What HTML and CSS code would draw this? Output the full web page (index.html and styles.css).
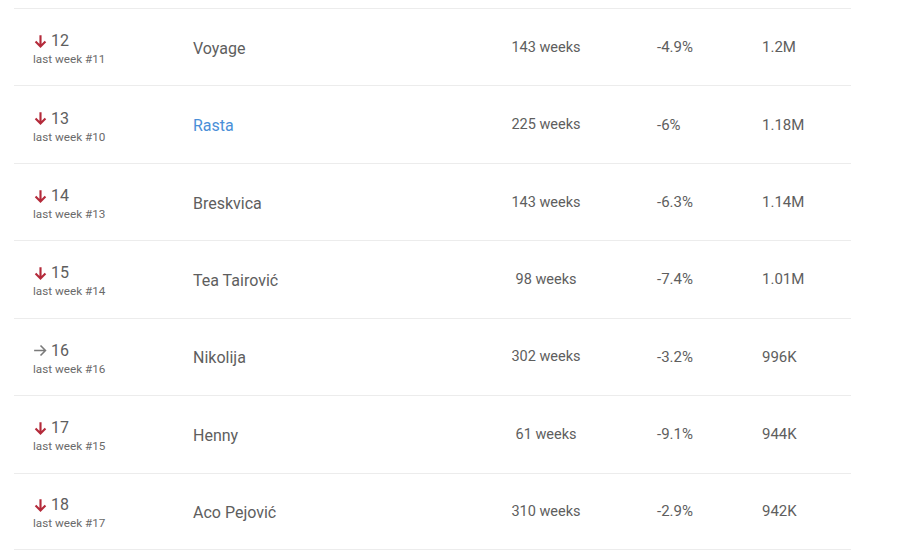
FILE: index.html
```html
<!DOCTYPE html>
<html lang="en">
<head>
<meta charset="utf-8">
<link rel="stylesheet" href="styles.css">
</head>
<body>
<div class="chart">
  <div class="row">
    <div class="rank"><div class="pos"><svg class="ic down" viewBox="0 0 24 24"><path d="M12 3v16M5 12l7 7 7-7"/></svg><span>12</span></div><div class="last">last week #11</div></div>
    <div class="name">Voyage</div>
    <div class="weeks">143 weeks</div>
    <div class="change">-4.9%</div>
    <div class="streams">1.2M</div>
  </div>
  <div class="row">
    <div class="rank"><div class="pos"><svg class="ic down" viewBox="0 0 24 24"><path d="M12 3v16M5 12l7 7 7-7"/></svg><span>13</span></div><div class="last">last week #10</div></div>
    <div class="name"><a class="link" href="#">Rasta</a></div>
    <div class="weeks">225 weeks</div>
    <div class="change">-6%</div>
    <div class="streams">1.18M</div>
  </div>
  <div class="row">
    <div class="rank"><div class="pos"><svg class="ic down" viewBox="0 0 24 24"><path d="M12 3v16M5 12l7 7 7-7"/></svg><span>14</span></div><div class="last">last week #13</div></div>
    <div class="name">Breskvica</div>
    <div class="weeks">143 weeks</div>
    <div class="change">-6.3%</div>
    <div class="streams">1.14M</div>
  </div>
  <div class="row">
    <div class="rank"><div class="pos"><svg class="ic down" viewBox="0 0 24 24"><path d="M12 3v16M5 12l7 7 7-7"/></svg><span>15</span></div><div class="last">last week #14</div></div>
    <div class="name">Tea Tairović</div>
    <div class="weeks">98 weeks</div>
    <div class="change">-7.4%</div>
    <div class="streams">1.01M</div>
  </div>
  <div class="row">
    <div class="rank"><div class="pos"><svg class="ic same" viewBox="0 0 24 24"><path d="M3 12h16M12 5l7 7-7 7"/></svg><span>16</span></div><div class="last">last week #16</div></div>
    <div class="name">Nikolija</div>
    <div class="weeks">302 weeks</div>
    <div class="change">-3.2%</div>
    <div class="streams">996K</div>
  </div>
  <div class="row">
    <div class="rank"><div class="pos"><svg class="ic down" viewBox="0 0 24 24"><path d="M12 3v16M5 12l7 7 7-7"/></svg><span>17</span></div><div class="last">last week #15</div></div>
    <div class="name">Henny</div>
    <div class="weeks">61 weeks</div>
    <div class="change">-9.1%</div>
    <div class="streams">944K</div>
  </div>
  <div class="row last-row">
    <div class="rank"><div class="pos"><svg class="ic down" viewBox="0 0 24 24"><path d="M12 3v16M5 12l7 7 7-7"/></svg><span>18</span></div><div class="last">last week #17</div></div>
    <div class="name">Aco Pejović</div>
    <div class="weeks">310 weeks</div>
    <div class="change">-2.9%</div>
    <div class="streams">942K</div>
  </div>
</div>
</body>
</html>
```

FILE: styles.css
```css
html, body {
  margin: 0;
  padding: 0;
  background: #fff;
}
body {
  font-family: Roboto, "Liberation Sans", sans-serif;
  color: #5e5e5e;
}
.chart {
  margin: 8px 0 0 14px;
  width: 837px;
}
.row {
  display: grid;
  grid-template-columns: 179px 287px 132px 150px 89px;
  align-items: center;
  height: 77.43px;
  box-sizing: border-box;
  border-top: 1px solid #ececec;
}
.last-row {
  border-bottom: 1px solid #ececec;
}
.rank {
  padding-left: 18px;
  display: flex;
  flex-direction: column;
  margin-top: 4px;
}
.pos {
  display: flex;
  align-items: center;
  font-size: 16px;
  line-height: 18px;
}
.pos span {
  margin-left: 2px;
}
.ic {
  width: 17px;
  height: 17px;
  fill: none;
  stroke-width: 3;
  stroke-linecap: butt;
  stroke-linejoin: miter;
}
.down { stroke: #b42a3a; }
.same { stroke: #7a7a7a; stroke-width: 2.2; }
.last {
  font-size: 11.7px;
  line-height: 14px;
  color: #6a6a6a;
  margin-top: 2px;
  margin-left: 1px;
}
.name {
  font-size: 16px;
  margin-top: 2px;
}
.link {
  color: #4a8fd8;
  text-decoration: none;
}
.weeks {
  font-size: 14.5px;
  text-align: center;
}
.change {
  font-size: 15px;
  padding-left: 45px;
}
.streams {
  font-size: 15px;
}
```
